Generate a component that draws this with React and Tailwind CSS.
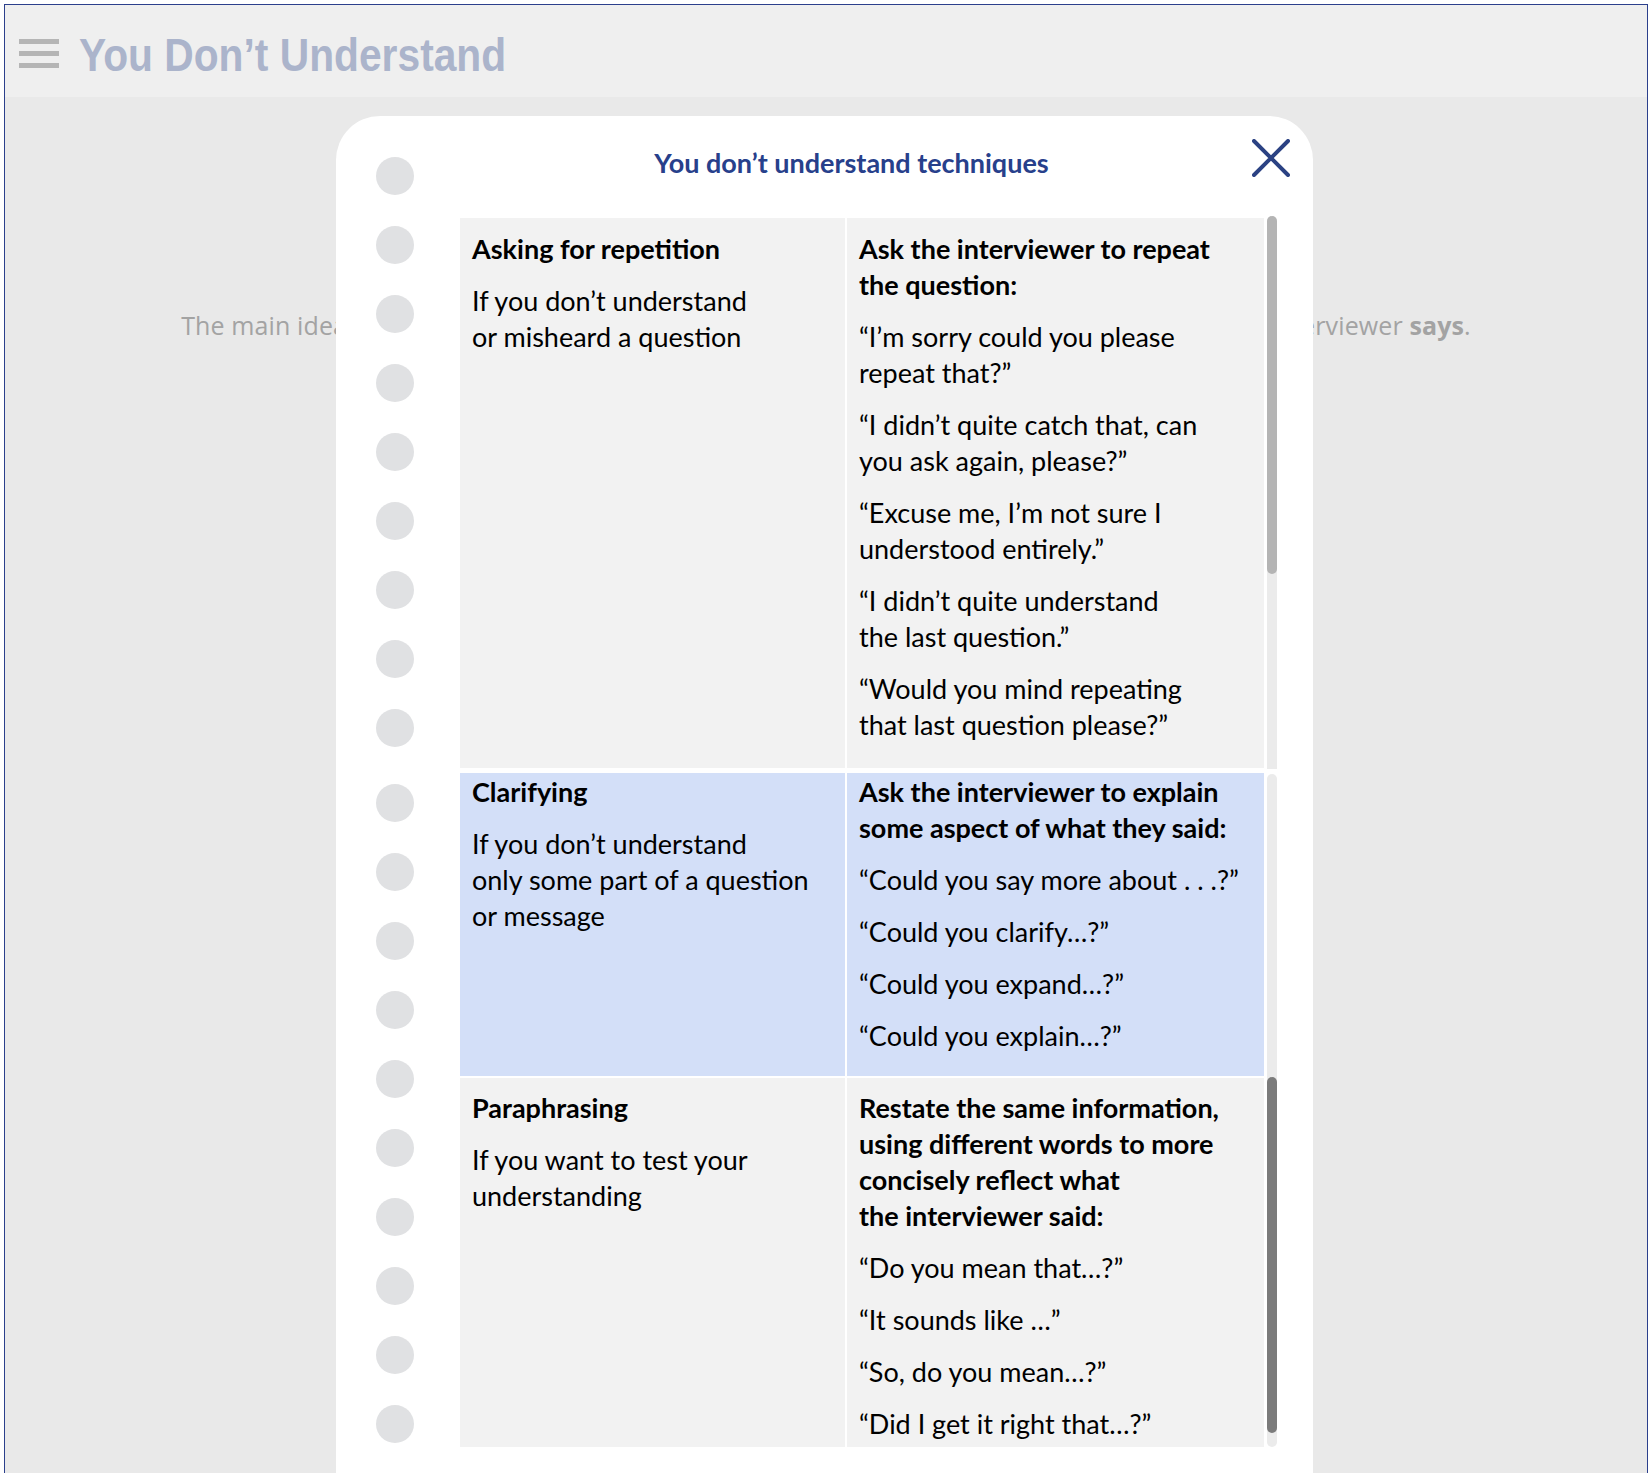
const circles = Array.from({ length: 19 });

const rows = [
  {
    bg: "bg-[#f2f2f2]",
    pad: "pt-[13px] pb-[25px]",
    title: "Asking for repetition",
    when: ["If you don’t understand", "or misheard a question"],
    lead: ["Ask the interviewer to repeat", "the question:"],
    phrases: [
      ["“I’m sorry could you please", "repeat that?”"],
      ["“I didn’t quite catch that, can", "you ask again, please?”"],
      ["“Excuse me, I’m not sure I", "understood entirely.”"],
      ["“I didn’t quite understand", "the last question.”"],
      ["“Would you mind repeating", "that last question please?”"],
    ],
  },
  {
    bg: "bg-[#d3dff8]",
    pad: "pt-[1px] pb-[22px]",
    title: "Clarifying",
    when: ["If you don’t understand", "only some part of a question", "or message"],
    lead: ["Ask the interviewer to explain", "some aspect of what they said:"],
    phrases: [
      ["“Could you say more about . . .?”"],
      ["“Could you clarify…?”"],
      ["“Could you expand…?”"],
      ["“Could you explain…?”"],
    ],
  },
  {
    bg: "bg-[#f2f2f2]",
    pad: "pt-[12px] pb-[25px]",
    title: "Paraphrasing",
    when: ["If you want to test your", "understanding"],
    lead: [
      "Restate the same information,",
      "using different words to more",
      "concisely reflect what",
      "the interviewer said:",
    ],
    phrases: [
      ["“Do you mean that…?”"],
      ["“It sounds like …”"],
      ["“So, do you mean…?”"],
      ["“Did I get it right that…?”"],
    ],
  },
];

function Lines({ lines }) {
  return lines.map((l, i) => (
    <span key={i} className="block whitespace-nowrap">
      {l}
    </span>
  ));
}

export default function App() {
  return (
    <div className="w-[1652px] h-[1473px] overflow-hidden bg-white pl-[4px] pr-[4px] pt-[4px]">
      <div className="relative h-[1480px] border border-b-0 border-[#2b3f8c] bg-[#e9e9e9]">
        {/* top bar */}
        <header className="h-[92px] bg-[#efefef] flex items-start pl-[14px] pt-[22px]">
          <div className="mt-[12px] flex flex-col gap-[7px]">
            <span className="block w-[40px] h-[5px] bg-[#b5b5b5]" />
            <span className="block w-[40px] h-[5px] bg-[#b5b5b5]" />
            <span className="block w-[40px] h-[5px] bg-[#b5b5b5]" />
          </div>
          <h1 className="ml-[20px] font-['Liberation_Sans',Arial,sans-serif] font-bold text-[46px] leading-[56px] text-[#abb4cb] origin-left scale-x-[0.886] whitespace-nowrap">
            You Don’t Understand
          </h1>
        </header>

        {/* page text behind the dialog */}
        <p className="pt-[210px] text-center font-['Open_Sans',sans-serif] text-[25px] leading-[36px] tracking-[0.12px] text-[#a3a3a3] whitespace-nowrap">
          The main idea of these techniques is to make sure that you completely understand what the interviewer <b className="font-bold">says</b>.
        </p>

        {/* dialog */}
        <div className="absolute left-[331px] top-[111px] w-[977px] h-[1400px] bg-white rounded-t-[44px] flex font-['Lato',sans-serif] text-black">
          <div className="pl-[40px] pt-[41px] flex flex-col gap-[31px]">
            {circles.map((_, i) => (
              <span
                key={i}
                className={`block w-[38px] h-[38px] rounded-full bg-[#e0e1e3] ${i === 9 ? "mt-[6px]" : ""}`}
              />
            ))}
          </div>

          <div className="ml-[46px] pt-[23px] w-[830px] flex flex-col">
            <div className="h-[77px] flex items-start">
              <h2 className="flex-1 pr-[9px] mt-[6px] text-center font-bold text-[27px] leading-[36px] text-[#27408b]">
                You don’t understand techniques
              </h2>
              <button className="w-[38px] h-[38px]" aria-label="Close">
                <svg viewBox="0 0 38 38" className="w-[38px] h-[38px]" fill="none" stroke="#2b4283" strokeWidth="4" strokeLinecap="round">
                  <path d="M2 2L36 36M36 2L2 36" />
                </svg>
              </button>
            </div>

            <div className="flex gap-[3px]">
              <div className="mt-[2px] w-[804px] h-[1229px] overflow-hidden flex flex-col text-[27px] leading-[36px]">
                {rows.map((r, i) => (
                  <div
                    key={i}
                    className={`grid grid-cols-[385px_417px] gap-x-[2px] shrink-0 ${i === 1 ? "mt-[5px]" : ""} ${i === 2 ? "mt-[2px]" : ""}`}
                  >
                    <div className={`${r.bg} ${r.pad} px-[12px] flex flex-col gap-[16px]`}>
                      <p className="font-bold whitespace-nowrap">{r.title}</p>
                      <p>
                        <Lines lines={r.when} />
                      </p>
                    </div>
                    <div className={`${r.bg} ${r.pad} px-[12px] flex flex-col gap-[16px]`}>
                      <p className="font-bold">
                        <Lines lines={r.lead} />
                      </p>
                      {r.phrases.map((p, j) => (
                        <p key={j}>
                          <Lines lines={p} />
                        </p>
                      ))}
                    </div>
                  </div>
                ))}
              </div>

              {/* scrollbar */}
              <div className="w-[10px] flex flex-col">
                <div className="h-[553px] bg-[#ebebeb] rounded-t-full flex flex-col">
                  <span className="block h-[358px] rounded-full bg-[#b4b4b4]" />
                </div>
                <div className="mt-[5px] h-[673px] bg-[#ebebeb] rounded-full flex flex-col justify-end pb-[14px]">
                  <span className="block h-[356px] rounded-full bg-[#7b7b7b]" />
                </div>
              </div>
            </div>
          </div>
        </div>
      </div>
    </div>
  );
}
